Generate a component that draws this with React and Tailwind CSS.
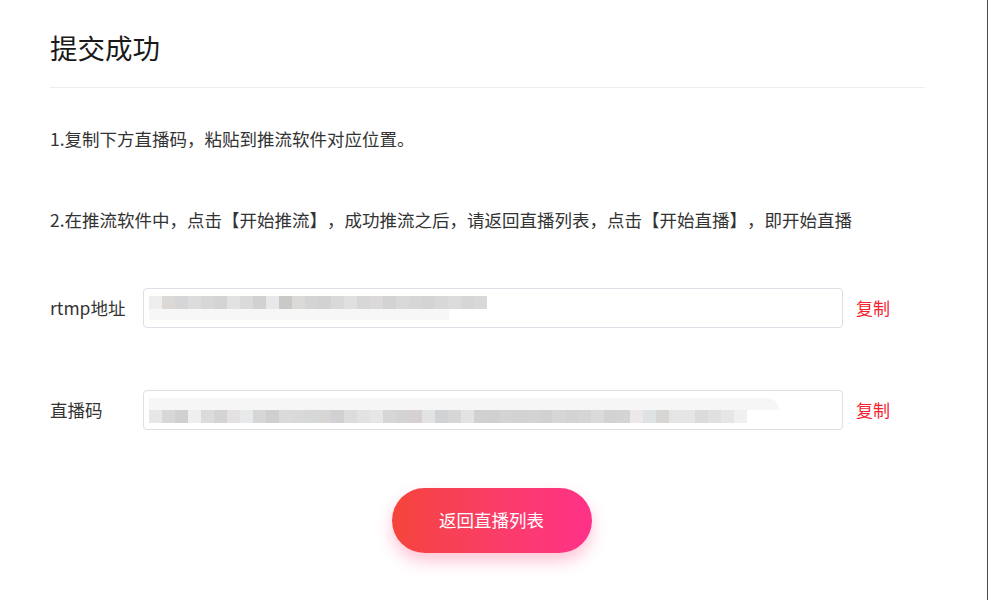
import React from "react";

const rtmpCells = [
  "#eeeeee", "#dcd8d6", "#d6d6d8", "#dcdcdc", "#d7d7d7", "#d4d4d4", "#e3e2e2", "#dadada",
  "#d1d1d1", "#e8e8ea", "#c9c9c7", "#dbdad8", "#d4d4d4", "#d2d2d2", "#dad9d9", "#e0e0e2",
  "#d7d7d7", "#dbd9d9", "#d3d3d3", "#d9d9d9", "#d6d6d6", "#d4d4d4", "#d8d8d8", "#dcdcdc",
  "#d6d6d6", "#d9d9d9",
];

const codeCells = [
  "#e8e6e6", "#d7d7d7", "#d0d0d0", "#eeeeee", "#dbdbdb", "#d4d4d4", "#e3e1e1", "#e8e9eb",
  "#d6d6d6", "#cfcfcf", "#dadada", "#d9d9d9", "#d5d7d9", "#d8d6d4", "#d1d1d3", "#dcdcdc",
  "#e2e2e2", "#e6e6e6", "#d6d6d6", "#d3d3d3", "#d5d1d0", "#e3e3e3", "#cfd3d6", "#d6d6d6",
  "#e3e3e3", "#d1d1d1", "#d1d0cf", "#d4d4d4", "#d2d2d2", "#d3d3d3", "#d1d1d1", "#d6d6d6",
  "#d3d3d3", "#d5d5d5", "#dadada", "#d2d2d2", "#d4d4d4", "#ece8e8", "#dfe2e4", "#d7d6d4",
  "#e5e5e5", "#e5e5e5", "#dbdbdb", "#e0e0e0", "#e6e6e6", "#f0f0f0",
];

const Blur = ({ cells, top = false }) => (
  <div className="flex flex-col">
    {top && <div className="h-[12px] w-[630px] bg-[#f6f6f6] rounded-tr-[12px]" />}
    <div className="flex">
      {cells.map((c, i) => (
        <div key={i} className="w-[13px] h-[13px]" style={{ backgroundColor: c }} />
      ))}
    </div>
    {!top && <div className="h-[11px] w-[300px] bg-[#f7f7f7]" />}
  </div>
);

const Field = ({ label, cells, top }) => (
  <div className="flex items-center">
    <div className="w-[93px] text-[17.5px] text-[#333]">{label}</div>
    <div className="w-[700px] h-[40px] border border-[#dcdfe6] rounded-[4px] bg-white flex items-center pl-[5px] overflow-hidden">
      <Blur cells={cells} top={top} />
    </div>
    <button className="ml-[13px] text-[17px] text-[#f5222d]">复制</button>
  </div>
);

export default function App() {
  return (
    <div
      className="w-[988px] h-[600px] bg-white border-r border-[#4a4a4a] overflow-hidden [text-spacing-trim:space-all]"
      style={{ fontFamily: '"Microsoft YaHei", "Noto Sans CJK SC", sans-serif' }}
    >
      <div className="pl-[50px] w-[925px]">
        <h1 className="pt-[30px] h-[88px] text-[27.5px] leading-[34px] text-[#1a1a1a] border-b border-[#eeeeee]">
          提交成功
        </h1>
      </div>
      <div className="px-[50px]">
        <p className="mt-[39px] text-[17.5px] leading-[24px] text-[#333]">
          1.复制下方直播码，粘贴到推流软件对应位置。
        </p>
        <p className="mt-[57px] text-[17.5px] leading-[24px] text-[#333]">
          2.在推流软件中，点击【开始推流】，成功推流之后，请返回直播列表，点击【开始直播】，即开始直播
        </p>
        <div className="mt-[56px] flex flex-col gap-[62px]">
          <Field label="rtmp地址" cells={rtmpCells} />
          <Field label="直播码" cells={codeCells} top />
        </div>
        <div className="mt-[58px] flex justify-center pr-[4px]">
          <button className="w-[200px] h-[65px] rounded-full bg-gradient-to-r from-[#f5443a] to-[#ff3188] text-white text-[17.5px] shadow-[0_8px_16px_rgba(255,60,120,0.3)]">
            返回直播列表
          </button>
        </div>
      </div>
    </div>
  );
}
